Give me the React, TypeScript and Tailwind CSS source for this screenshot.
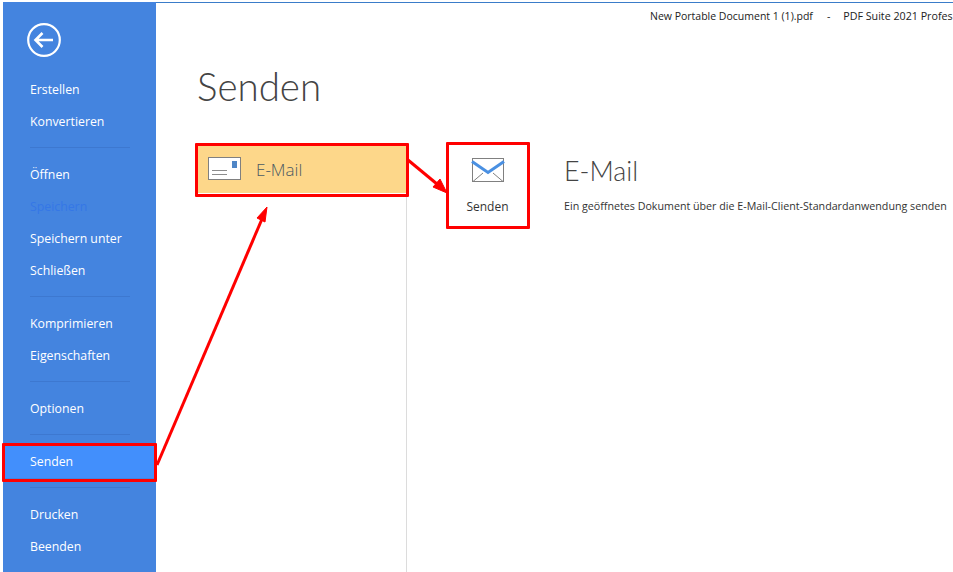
const sidebarGroups = [
  ["Erstellen", "Konvertieren"],
  ["Öffnen", "Speichern", "Speichern unter", "Schließen"],
  ["Komprimieren", "Eigenschaften"],
  ["Optionen"],
  ["Senden"],
  ["Drucken", "Beenden"],
];

function SidebarItem({ label }: { label: string }) {
  const disabled = label === "Speichern";
  const active = label === "Senden";
  return (
    <div
      className={`flex h-8 items-center pl-[27px] text-[12.3px] ${
        disabled ? "text-[#3577e6]" : "text-white"
      } ${active ? "bg-[#428ffc]" : ""}`}
    >
      {label}
    </div>
  );
}

function Sidebar() {
  return (
    <div className="flex w-[153px] shrink-0 flex-col bg-[#4484df]">
      <div className="h-[72px] pl-[24px] pt-[21px]">
        <svg width="34" height="34" viewBox="0 0 34 34" fill="none" stroke="white">
          <circle cx="17" cy="17" r="15.8" strokeWidth="2.2" />
          <path d="M8.5 17H26M15.5 10L8.5 17L15.5 24" strokeWidth="2.6" />
        </svg>
      </div>
      {sidebarGroups.map((group, i) => (
        <div key={i}>
          {i > 0 && (
            <div className="h-[21px] pl-[27px] pt-[9px]">
              <div className="h-px w-[100px] bg-[#3d78d0]" />
            </div>
          )}
          {group.map((label) => (
            <SidebarItem key={label} label={label} />
          ))}
        </div>
      ))}
    </div>
  );
}

function EnvelopeCard() {
  return (
    <svg width="34" height="26" viewBox="0 0 34 26" fill="none">
      <rect x="1.5" y="0.5" width="31" height="23" fill="white" stroke="#808080" />
      <path d="M2 23.5L12 15M32 23.5L22 15" stroke="#808080" />
      <path d="M1 3.5L17 14.5L33 3.5" stroke="#4a90e2" strokeWidth="3" />
    </svg>
  );
}

function PostcardIcon() {
  return (
    <svg width="34" height="25" viewBox="0 0 34 25" fill="none">
      <rect x="0.5" y="0.5" width="32" height="22" fill="white" stroke="#808080" />
      <rect x="24" y="4" width="5" height="7" fill="#4f86c6" />
      <path d="M4 13.5H19M4 17.5H19" stroke="#8c8c8c" />
    </svg>
  );
}

export default function App() {
  return (
    <div
      className="relative flex h-[572px] w-[953px] overflow-hidden bg-white pl-[3px] pt-[2px]"
      style={{ fontFamily: '"Open Sans", sans-serif' }}
    >
      <Sidebar />

      <div className="flex min-w-0 flex-1 flex-col border-t border-[#3a7cc9]">
        <div className="flex h-[27px] justify-end whitespace-nowrap pt-[5px] text-[10.5px] leading-[16px] text-[#222]">
          <div className="flex w-[303px] shrink-0">
            <span>New Portable Document 1 (1).pdf</span>
            <span className="ml-[14px]">-</span>
            <span className="ml-[13px] text-[10.7px]">PDF Suite 2021 Profes</span>
          </div>
        </div>

        <div className="pl-[41px] pt-[31px] font-['Lato'] text-[38.5px] font-light leading-[50px] text-[#444]">Senden</div>

        <div className="flex flex-1 pt-[35px]">
          <div className="ml-[42px] w-[209px] shrink-0 border-r border-[#dcdcdc]">
            <div className="flex h-[47px] w-[208px] items-center gap-[14px] bg-[#fdd78a] pl-[10px] text-[17px] font-light text-[#4a5a63]">
              <PostcardIcon />
              E-Mail
            </div>
          </div>

          <div className="flex items-start">
            <div className="ml-[41px] mt-[-1px] flex h-[81px] w-[79px] flex-col items-center pt-[13px]">
              <EnvelopeCard />
              <div className="mt-[14px] text-[12px] text-[#333]">Senden</div>
            </div>
            <div className="ml-[37px] whitespace-nowrap pt-[7px]">
              <div className="font-['Lato'] text-[26.8px] font-light leading-[36px] text-[#444]">E-Mail</div>
              <div className="mt-[9px] text-[10.7px] text-[#333]">
                Ein geöffnetes Dokument über die E-Mail-Client-Standardanwendung senden
              </div>
            </div>
          </div>
        </div>
      </div>

      {/* annotations drawn on top of the window */}
      <div className="absolute left-[195px] top-[143px] h-[54px] w-[214px] rounded-[1px] border-[3px] border-[#ff0000]" />
      <div className="absolute left-[446px] top-[142px] h-[87px] w-[84px] rounded-[1px] border-[3px] border-[#ff0000]" />
      <div className="absolute left-[2px] top-[443px] h-[39px] w-[155px] rounded-[1px] border-[3px] border-[#ff0000]" />
      <svg className="absolute left-0 top-0" width="953" height="572" fill="none">
        <path d="M157 465L262 219" stroke="#ff0000" strokeWidth="3" />
        <path d="M267 207L257 218L265 222Z" fill="#ff0000" stroke="#ff0000" />
        <path d="M408 160L437 184" stroke="#ff0000" strokeWidth="3" />
        <path d="M447 193L433 187L440 179Z" fill="#ff0000" stroke="#ff0000" />
      </svg>
    </div>
  );
}
